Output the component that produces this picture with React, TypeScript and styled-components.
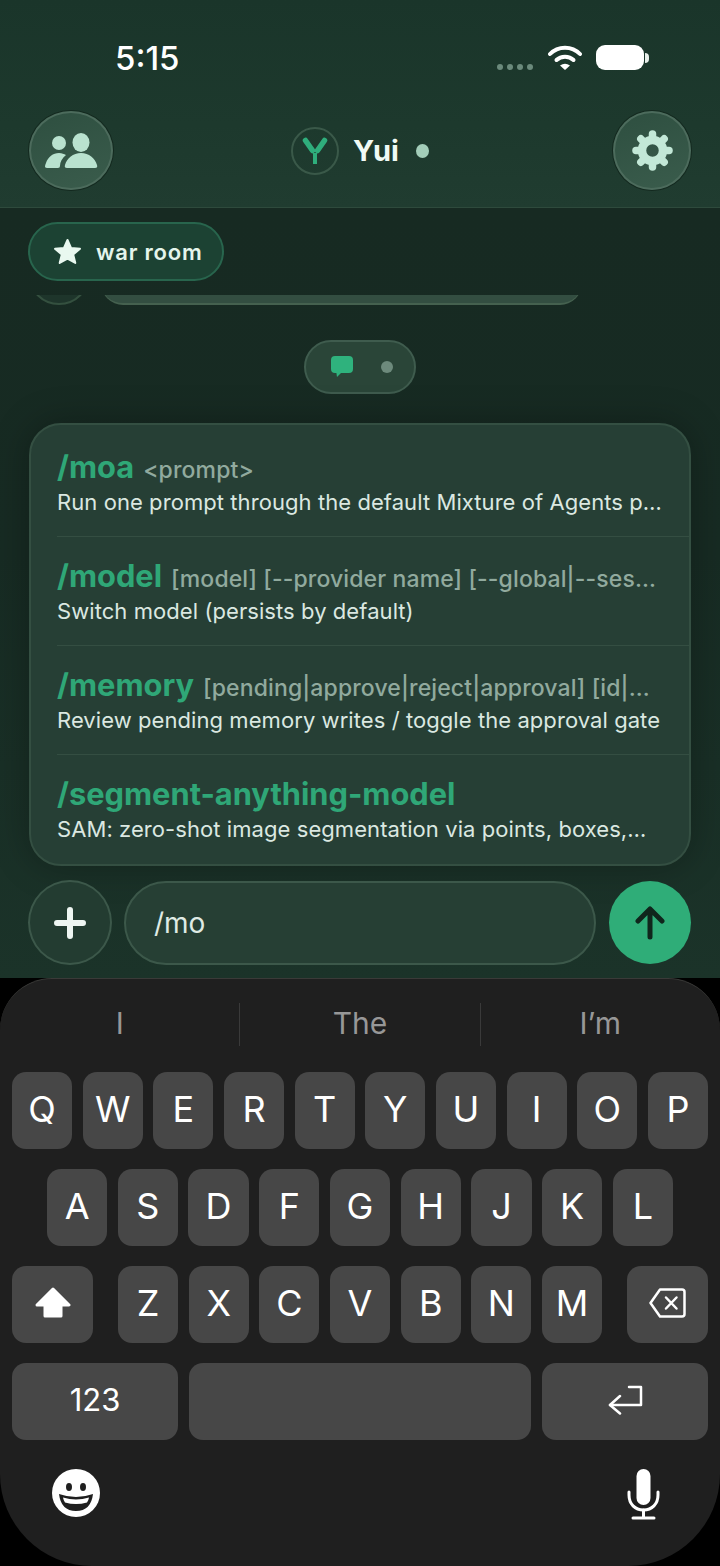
import styled, { createGlobalStyle } from "styled-components";

const GlobalStyle = createGlobalStyle`
    html, body {
        margin: 0;
        padding: 0;
        background: #000;
    }
    * {
        box-sizing: border-box;
    }
`
const Screen = styled.div`
    width: 720px;
    height: 1566px;
    display: flex;
    flex-direction: column;
    background: #000;
    font-family: Inter, "Liberation Sans", sans-serif;
    overflow: hidden;
`
const Header = styled.header`
    height: 208px;
    flex-shrink: 0;
    background: linear-gradient(180deg, #1a352a 0%, #1d392d 60%, #203c30 100%);
    border-bottom: 1px solid #2e4a3c;
`
const StatusBar = styled.div`
    height: 111px;
    padding: 41px 76px 0 115px;
    display: flex;
    justify-content: space-between;
    align-items: flex-start;
`
const Clock = styled.span`
    font-size: 33px;
    line-height: 34px;
    font-weight: 500;
    color: #fff;
`
const StatusIcons = styled.div`
    display: flex;
    align-items: flex-start;
    padding-top: 4px;
`
const SignalDots = styled.div`
    display: flex;
    gap: 4px;
    margin-top: 19px;
    margin-right: 15px;
`
const SignalDot = styled.i`
    width: 6px;
    height: 6px;
    border-radius: 50%;
    background: #6b8a7c;
`
const Battery = styled.div`
    width: 48px;
    height: 25px;
    margin-left: 14px;
    border-radius: 9px;
    background: #fff;
    position: relative;
    &::after {
        content: "";
        position: absolute;
        right: -5px;
        top: 8px;
        width: 4px;
        height: 10px;
        border-radius: 0 4px 4px 0;
        background: #e8efeb;
    }
`
const NavBar = styled.nav`
    padding: 0 29px;
    display: flex;
    justify-content: space-between;
    align-items: center;
`
const RoundButton = styled.button<{ $width: number }>`
    width: ${p => p.$width}px;
    height: 79px;
    padding: 0;
    border-radius: 50%;
    border: 2px solid #4c6b5c;
    background: linear-gradient(160deg, #2e4f40, #3a5c4c);
    box-shadow: 0 0 0 1px #14291f;
    display: flex;
    align-items: center;
    justify-content: center;
`
const Identity = styled.div`
    width: 144px;
    padding-right: 6px;
    display: flex;
    align-items: center;
`
const LogoRing = styled.div`
    width: 48px;
    height: 48px;
    border-radius: 50%;
    border: 2px solid #3a5949;
    display: flex;
    align-items: center;
    justify-content: center;
`
const AgentName = styled.span`
    margin-left: 14px;
    font-size: 29px;
    line-height: 34px;
    font-weight: 700;
    color: #f0faf5;
`
const OnlineDot = styled.i`
    width: 14px;
    height: 14px;
    margin-left: 17px;
    border-radius: 50%;
    background: #a3cdb9;
`
const Body = styled.main`
    flex: 1;
    min-height: 0;
    padding: 14px 29px 13px 28px;
    display: flex;
    flex-direction: column;
    background: linear-gradient(180deg, #172a22 0%, #172b23 45%, #1b3329 100%);
`
const ChannelChip = styled.div`
    width: 196px;
    height: 59px;
    padding-left: 23px;
    border-radius: 30px;
    border: 2px solid #28654d;
    background: #1c4233;
    display: flex;
    align-items: center;
    gap: 14px;
`
const ChannelName = styled.span`
    font-size: 22px;
    font-weight: 600;
    letter-spacing: 0.8px;
    color: #e4f5ec;
`
/* last message, scrolled almost out of view under the chip */
const ClippedMessage = styled.div`
    height: 10px;
    margin-top: 14px;
    display: flex;
    align-items: flex-end;
    gap: 11px;
    overflow: hidden;
    flex-shrink: 0;
`
const ClippedAvatar = styled.div`
    width: 62px;
    height: 62px;
    flex-shrink: 0;
    border-radius: 50%;
    border: 2px solid #34503f;
    background: #1e352b;
`
const ClippedBubble = styled.div`
    width: 481px;
    height: 60px;
    flex-shrink: 0;
    border-radius: 22px;
    border-bottom: 2px solid #45614f;
    background: #334e41;
`
const ModePill = styled.div`
    align-self: center;
    width: 112px;
    height: 54px;
    margin-top: 35px;
    margin-left: 1px;
    padding-left: 25px;
    border-radius: 27px;
    border: 2px solid #3f5c4e;
    background: #2a4538;
    display: flex;
    align-items: center;
    gap: 28px;
`
const InactiveMode = styled.i`
    width: 12px;
    height: 12px;
    border-radius: 50%;
    background: #6d8a7c;
`
const CommandCard = styled.section`
    height: 443px;
    margin-top: 29px;
    margin-left: 1px;
    padding-top: 3px;
    border-radius: 32px;
    border: 2px solid #344f42;
    background: #263f35;
    box-shadow: 0 0 36px rgba(0, 0, 0, 0.28);
    flex-shrink: 0;
`
const CommandRow = styled.div<{ $last?: boolean }>`
    height: 109px;
    margin-left: 26px;
    padding-top: 21px;
    border-bottom: ${p => (p.$last ? "none" : "1px solid #344e42")};
`
const CommandLine = styled.div`
    height: 36px;
    line-height: 36px;
    white-space: nowrap;
    font-size: 23px;
    color: #91aa9e;
`
const CommandName = styled.span`
    font-size: 30.8px;
    font-weight: 700;
    color: #2fa777;
`
const CommandArgs = styled.span`
    margin-left: 9px;
    font-weight: 500;
    letter-spacing: 0.13px;
`
const CommandDescription = styled.div`
    height: 34px;
    line-height: 34px;
    white-space: nowrap;
    font-size: 22px;
    letter-spacing: 0.07px;
    color: #dbe8e1;
`
const Composer = styled.div`
    height: 85px;
    margin-top: 14px;
    display: flex;
    align-items: center;
`
const AttachButton = styled.button`
    width: 84px;
    height: 85px;
    flex-shrink: 0;
    padding: 0;
    border-radius: 50%;
    border: 2px solid #3c584a;
    background: #233c31;
    display: flex;
    align-items: center;
    justify-content: center;
`
const MessageField = styled.div`
    width: 472px;
    height: 84px;
    margin-left: 12px;
    padding-left: 28px;
    border-radius: 42px;
    border: 2px solid #3c584a;
    background: #263f34;
    display: flex;
    align-items: center;
    font-size: 28px;
    color: #dfeae4;
`
const SendButton = styled.button`
    width: 82px;
    height: 83px;
    margin-left: 13px;
    flex-shrink: 0;
    padding: 0;
    border: none;
    border-radius: 50%;
    background: #2fad78;
    display: flex;
    align-items: center;
    justify-content: center;
`
const Keyboard = styled.div`
    height: 588px;
    flex-shrink: 0;
    padding-top: 24px;
    border-top: 1px solid #3a3a38;
    border-radius: 52px 52px 92px 92px;
    background: #1f1f1f;
`
const Predictions = styled.div`
    height: 43px;
    display: flex;
`
const Prediction = styled.div<{ $divider?: boolean }>`
    flex: 1;
    padding-bottom: 4px;
    display: flex;
    align-items: center;
    justify-content: center;
    font-size: 30px;
    color: #979797;
    border-right: ${p => (p.$divider ? "1px solid #3a3a3a" : "none")};
`
const KeyRows = styled.div`
    margin-top: 26px;
    display: flex;
    flex-direction: column;
    gap: 20.5px;
`
const KeyRow = styled.div<{ $inset: number }>`
    padding: 0 ${p => p.$inset}px;
    height: 76.5px;
    display: flex;
    justify-content: space-between;
    gap: 10.6px;
`
const Key = styled.div<{ $width?: number }>`
    flex: ${p => (p.$width ? `0 0 ${p.$width}px` : "1")};
    min-width: 0;
    padding-bottom: 3px;
    border-radius: 14px;
    background: #474747;
    display: flex;
    align-items: center;
    justify-content: center;
    font-size: 36px;
    color: #fff;
`
const NumbersKey = styled(Key)`
    font-size: 31px;
`
const LetterGroup = styled.div`
    flex: 0 0 484px;
    display: flex;
    gap: 10.6px;
`
const KeyboardFooter = styled.div`
    margin-top: 29px;
    padding: 0 60px 0 52px;
    display: flex;
    justify-content: space-between;
    align-items: flex-start;
`

const PeopleIcon = () => (
    <svg width="53" height="36" viewBox="0 0 53 36" fill="#b9e2cf">
        <circle cx="14" cy="10" r="7" />
        <ellipse cx="36" cy="9.5" rx="8.5" ry="9.5" />
        <path d="M2 35 C-1 35 0 32 1 30 C3 24 8 20 14 20 C17 20 19 21 21 22 C17 25 15 29 15 33 Q15 35 13 35 Z" />
        <path d="M22 35 Q19 35 20 32 C22 25 28 20 36 20 C44 20 50 25 52 32 Q53 35 50 35 Z" />
    </svg>
)

const GearIcon = () => (
    <svg width="41" height="41" viewBox="0 0 41 41" fill="none" stroke="#c3e8d7">
        <circle cx="20.5" cy="20.5" r="10.5" strokeWidth="8.5" />
        {[0, 45, 90, 135, 180, 225, 270, 315].map(angle => (
            <line
                key={angle}
                x1="20.5"
                y1="6.5"
                x2="20.5"
                y2="4"
                strokeWidth="7.5"
                strokeLinecap="round"
                transform={`rotate(${angle} 20.5 20.5)`}
            />
        ))}
    </svg>
)

const LogoIcon = () => (
    <svg width="44" height="44" viewBox="0 0 44 44" fill="none" stroke="#2fae7c" strokeLinecap="round">
        <path d="M12.5 11.5 L19.5 21.5" strokeWidth="5.5" />
        <path d="M31.5 11.5 L24.5 21.5" strokeWidth="5.5" />
        <path d="M22 24 V35" strokeWidth="4" strokeLinecap="butt" />
    </svg>
)

const WifiIcon = () => (
    <svg width="34" height="25" viewBox="0 0 34 25" fill="none" stroke="#fff" strokeWidth="4" strokeLinecap="round">
        <path d="M2 9 C10 0.5 24 0.5 32 9" />
        <path d="M8.5 15 C13 10.5 21 10.5 25.5 15" />
        <path d="M12 20.5 Q17 17 22 20.5 L17 25 Z" fill="#fff" stroke="none" />
    </svg>
)

const StarIcon = () => (
    <svg width="29" height="27" viewBox="0 0 29 27" fill="#e9f8f0" stroke="#e9f8f0" strokeWidth="2" strokeLinejoin="round">
        <path d="M14.5 2 L18 10 L27 10.8 L20.2 16.6 L22.3 25 L14.5 20.6 L6.7 25 L8.8 16.6 L2 10.8 L11 10 Z" />
    </svg>
)

const ChatIcon = () => (
    <svg width="22" height="22" viewBox="0 0 22 22" fill="#2fb27d">
        <path d="M4 0 H18 Q22 0 22 4 V13 Q22 17 18 17 H10 L6 21 L5.4 17 H4 Q0 17 0 13 V4 Q0 0 4 0 Z" />
    </svg>
)

const PlusIcon = () => (
    <svg width="32" height="32" viewBox="0 0 32 32" stroke="#eef6f2" strokeWidth="6" strokeLinecap="round">
        <path d="M16 3 V29 M3 16 H29" />
    </svg>
)

const ArrowIcon = () => (
    <svg width="30" height="34" viewBox="0 0 30 34" fill="none" stroke="#10261c" strokeWidth="5" strokeLinecap="round" strokeLinejoin="round">
        <path d="M15 31 V3 M3 15 L15 3 L27 15" />
    </svg>
)

const ShiftIcon = () => (
    <svg width="36" height="31" viewBox="0 0 36 31" fill="#fff" stroke="#fff" strokeWidth="3" strokeLinejoin="round">
        <path d="M18 2 L34 18 H26 V29 H10 V18 H2 Z" />
    </svg>
)

const BackspaceIcon = () => (
    <svg width="37" height="30" viewBox="0 0 37 30" fill="none" stroke="#fff" strokeWidth="2.5" strokeLinecap="round" strokeLinejoin="round">
        <path d="M11 1.5 H33 Q35.5 1.5 35.5 4 V26 Q35.5 28.5 33 28.5 H11 L1.5 15 Z" />
        <path d="M17 9.5 L27.5 20.5 M27.5 9.5 L17 20.5" />
    </svg>
)

const ReturnIcon = () => (
    <svg width="35" height="30" viewBox="0 0 35 30" fill="none" stroke="#fff" strokeWidth="2.5" strokeLinecap="round" strokeLinejoin="round">
        <path d="M21 2 H33 V20 H2" />
        <path d="M12 11 L2 20 L12 28.5" />
    </svg>
)

const EmojiIcon = () => (
    <svg width="48" height="48" viewBox="0 0 48 48">
        <circle cx="24" cy="24" r="24" fill="#fff" />
        <ellipse cx="17" cy="18" rx="3" ry="4" fill="#1f1f1f" />
        <ellipse cx="31" cy="18" rx="3" ry="4" fill="#1f1f1f" />
        <path d="M7 25 Q24 31 41 25 Q39 42 24 42 Q9 42 7 25 Z" fill="#1f1f1f" />
        <path d="M11 28.5 Q24 32.5 37 28.5 Q36.5 31.5 35 33.5 Q24 36.5 13 33.5 Q11.5 31.5 11 28.5 Z" fill="#fff" />
    </svg>
)

const MicIcon = () => (
    <svg width="33" height="51" viewBox="0 0 33 51" fill="none" stroke="#fff" strokeWidth="3" strokeLinecap="round">
        <rect x="9.5" y="0" width="14" height="36" rx="7" fill="#fff" stroke="none" />
        <path d="M2 23 V26 C2 35 8 41 16.5 41 C25 41 31 35 31 26 V23" />
        <path d="M16.5 41 V49 M6 49 H27" />
    </svg>
)

const commands = [
    { name: "/moa", args: "<prompt>", description: "Run one prompt through the default Mixture of Agents p…" },
    { name: "/model", args: "[model] [--provider name] [--global|--ses…", description: "Switch model (persists by default)" },
    { name: "/memory", args: "[pending|approve|reject|approval] [id|…", description: "Review pending memory writes / toggle the approval gate" },
    { name: "/segment-anything-model", args: "", description: "SAM: zero-shot image segmentation via points, boxes,…" },
];

export default function App() {
    return (
        <Screen>
            <GlobalStyle />
            <Header>
                <StatusBar>
                    <Clock>5:15</Clock>
                    <StatusIcons>
                        <SignalDots>
                            <SignalDot />
                            <SignalDot />
                            <SignalDot />
                            <SignalDot />
                        </SignalDots>
                        <WifiIcon />
                        <Battery />
                    </StatusIcons>
                </StatusBar>
                <NavBar>
                    <RoundButton $width={84}><PeopleIcon /></RoundButton>
                    <Identity>
                        <LogoRing><LogoIcon /></LogoRing>
                        <AgentName>Yui</AgentName>
                        <OnlineDot />
                    </Identity>
                    <RoundButton $width={78}><GearIcon /></RoundButton>
                </NavBar>
            </Header>
            <Body>
                <ChannelChip>
                    <StarIcon />
                    <ChannelName>war room</ChannelName>
                </ChannelChip>
                <ClippedMessage>
                    <ClippedAvatar />
                    <ClippedBubble />
                </ClippedMessage>
                <ModePill>
                    <ChatIcon />
                    <InactiveMode />
                </ModePill>
                <CommandCard>
                    {commands.map((command, index) => (
                        <CommandRow key={command.name} $last={index === commands.length - 1}>
                            <CommandLine>
                                <CommandName>{command.name}</CommandName>
                                {command.args && <CommandArgs>{command.args}</CommandArgs>}
                            </CommandLine>
                            <CommandDescription>{command.description}</CommandDescription>
                        </CommandRow>
                    ))}
                </CommandCard>
                <Composer>
                    <AttachButton><PlusIcon /></AttachButton>
                    <MessageField>/mo</MessageField>
                    <SendButton><ArrowIcon /></SendButton>
                </Composer>
            </Body>
            <Keyboard>
                <Predictions>
                    <Prediction $divider>I</Prediction>
                    <Prediction $divider>The</Prediction>
                    <Prediction>I’m</Prediction>
                </Predictions>
                <KeyRows>
                    <KeyRow $inset={12}>
                        {"QWERTYUIOP".split("").map(letter => <Key key={letter}>{letter}</Key>)}
                    </KeyRow>
                    <KeyRow $inset={47}>
                        {"ASDFGHJKL".split("").map(letter => <Key key={letter}>{letter}</Key>)}
                    </KeyRow>
                    <KeyRow $inset={12}>
                        <Key $width={81}><ShiftIcon /></Key>
                        <LetterGroup>
                            {"ZXCVBNM".split("").map(letter => <Key key={letter}>{letter}</Key>)}
                        </LetterGroup>
                        <Key $width={81}><BackspaceIcon /></Key>
                    </KeyRow>
                    <KeyRow $inset={12}>
                        <NumbersKey $width={166}>123</NumbersKey>
                        <Key />
                        <Key $width={166}><ReturnIcon /></Key>
                    </KeyRow>
                </KeyRows>
                <KeyboardFooter>
                    <EmojiIcon />
                    <MicIcon />
                </KeyboardFooter>
            </Keyboard>
        </Screen>
    );
}
